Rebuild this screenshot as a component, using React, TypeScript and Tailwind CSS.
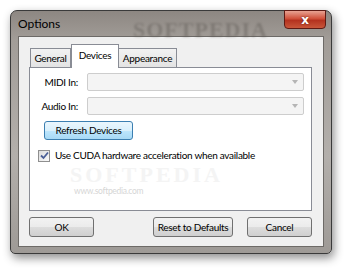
export default function App() {
   return (
      <div className="w-[350px] h-[272px] bg-white pt-[10px] pl-[10px] font-['Lato','Liberation_Sans',sans-serif] text-[10px] tracking-[-0.3px] text-black whitespace-nowrap">
         <div
            className={`
               relative w-[322px] h-[244px] flex flex-col
               rounded-t-[7px] rounded-b-[5px] border border-[#3a3a3a]
               bg-[linear-gradient(180deg,#8d8782_0%,#a29d98_12%,#b3afab_60%,#9e9a96_100%)]
               shadow-[2px_4px_10px_rgba(0,0,0,0.45)]
            `}
         >
            {/* title bar */}
            <div className="h-[25px] flex items-center pl-[7px] relative">
               <span className="text-[12px] tracking-normal text-black">Options</span>
               <span className="absolute left-[122px] top-[2px] text-[22px] font-bold tracking-[1px] text-[#5a5550] opacity-40 blur-[1px] font-['Liberation_Serif',serif]">
                  SOFTPEDIA
               </span>
               <div
                  className={`
                     absolute right-[5px] top-[-1px] w-[42px] h-[19px] rounded-b-[4px]
                     border border-[#5e1a14]
                     bg-[linear-gradient(180deg,#e8a393_0%,#d0503a_45%,#b4321f_55%,#c8563a_100%)]
                     flex items-center justify-center
                  `}
               >
                  <span className="text-white font-bold text-[12px] leading-none font-['DejaVu_Sans',sans-serif] [text-shadow:0_0_2px_#5a1a10]">
                     x
                  </span>
               </div>
            </div>

            {/* client area */}
            <div className="mx-[7px] mb-[6px] flex-1 bg-[#f0f0f0] border border-[#6d6a67] flex flex-col pt-[7px] pl-[10px] pr-[11px]">
               {/* tabs */}
               <div className="flex items-end h-[23px] relative z-10">
                  <div className="h-[19px] w-[41px] ml-[1px] border border-b-0 border-[#898c95] bg-[linear-gradient(180deg,#f2f2f2,#e3e3e3)] flex items-center justify-center">
                     General
                  </div>
                  <div className="h-[24px] w-[48px] -mb-[1px] border border-b-0 border-[#898c95] bg-white flex items-start pt-[3px] justify-center">
                     Devices
                  </div>
                  <div className="h-[19px] w-[58px] border border-b-0 border-l-0 border-[#898c95] bg-[linear-gradient(180deg,#f2f2f2,#e3e3e3)] flex items-center justify-center">
                     Appearance
                  </div>
               </div>

               {/* panel */}
               <div className="h-[144px] bg-white border border-[#898c95] relative flex flex-col pt-[5px] pl-[7px] pr-[7px] overflow-hidden">
                  <span className="absolute left-[40px] top-[96px] text-[22px] leading-none font-bold text-[#f4f4f4] font-['Liberation_Serif',serif] tracking-[3px]">
                     SOFTPEDIA
                  </span>
                  <span className="absolute left-[44px] top-[119px] text-[8.5px] leading-none text-[#d6d6d6]">
                     www.softpedia.com
                  </span>
                  <div className="relative flex items-center h-[18px]">
                     <span className="w-[41px] text-right">MIDI In:</span>
                     <div className="ml-[9px] flex-1 h-[18px] rounded-[2px] border border-[#cdcdcd] bg-[#f4f4f4] flex items-center justify-end pr-[5px]">
                        <span className="w-0 h-0 border-l-[3.5px] border-r-[3.5px] border-t-[4px] border-l-transparent border-r-transparent border-t-[#b5b5b5]" />
                     </div>
                  </div>
                  <div className="relative flex items-center h-[18px] mt-[6px]">
                     <span className="w-[41px] text-right">Audio In:</span>
                     <div className="ml-[9px] flex-1 h-[18px] rounded-[2px] border border-[#cdcdcd] bg-[#f4f4f4] flex items-center justify-end pr-[5px]">
                        <span className="w-0 h-0 border-l-[3.5px] border-r-[3.5px] border-t-[4px] border-l-transparent border-r-transparent border-t-[#b5b5b5]" />
                     </div>
                  </div>
                  <div className="relative mt-[6px] ml-[7px] w-[89px] h-[19px] rounded-[3px] border border-[#3c7fb1] bg-[linear-gradient(180deg,#eaf6fd_0%,#d9f0fc_50%,#bee6fd_51%,#a7d9f5_100%)] flex items-center justify-center">
                     Refresh Devices
                  </div>
                  <div className="relative mt-[8px] flex items-center">
                     <div className="w-[12px] h-[12px] ml-[1px] border border-[#8f8f8f] bg-[linear-gradient(135deg,#dcdcdc,#fafafa)] flex items-center justify-center">
                        <svg width="9" height="9" viewBox="0 0 9 9">
                           <path d="M1 4.5 L3.5 7 L8 1.5" fill="none" stroke="#4a5f97" strokeWidth="1.8" />
                        </svg>
                     </div>
                     <span className="ml-[5px]">Use CUDA hardware acceleration when available</span>
                  </div>
               </div>

               {/* buttons */}
               <div className="flex mt-[6px]">
                  <div className="w-[65px] h-[20px] rounded-[3px] border border-[#707070] bg-[linear-gradient(180deg,#f2f2f2_0%,#ebebeb_50%,#dddddd_51%,#cfcfcf_100%)] flex items-center justify-center">
                     OK
                  </div>
                  <div className="ml-auto w-[80px] h-[20px] rounded-[3px] border border-[#707070] bg-[linear-gradient(180deg,#f2f2f2_0%,#ebebeb_50%,#dddddd_51%,#cfcfcf_100%)] flex items-center justify-center">
                     Reset to Defaults
                  </div>
                  <div className="ml-[14px] w-[65px] h-[20px] rounded-[3px] border border-[#707070] bg-[linear-gradient(180deg,#f2f2f2_0%,#ebebeb_50%,#dddddd_51%,#cfcfcf_100%)] flex items-center justify-center">
                     Cancel
                  </div>
               </div>
            </div>
         </div>
      </div>
   );
}
